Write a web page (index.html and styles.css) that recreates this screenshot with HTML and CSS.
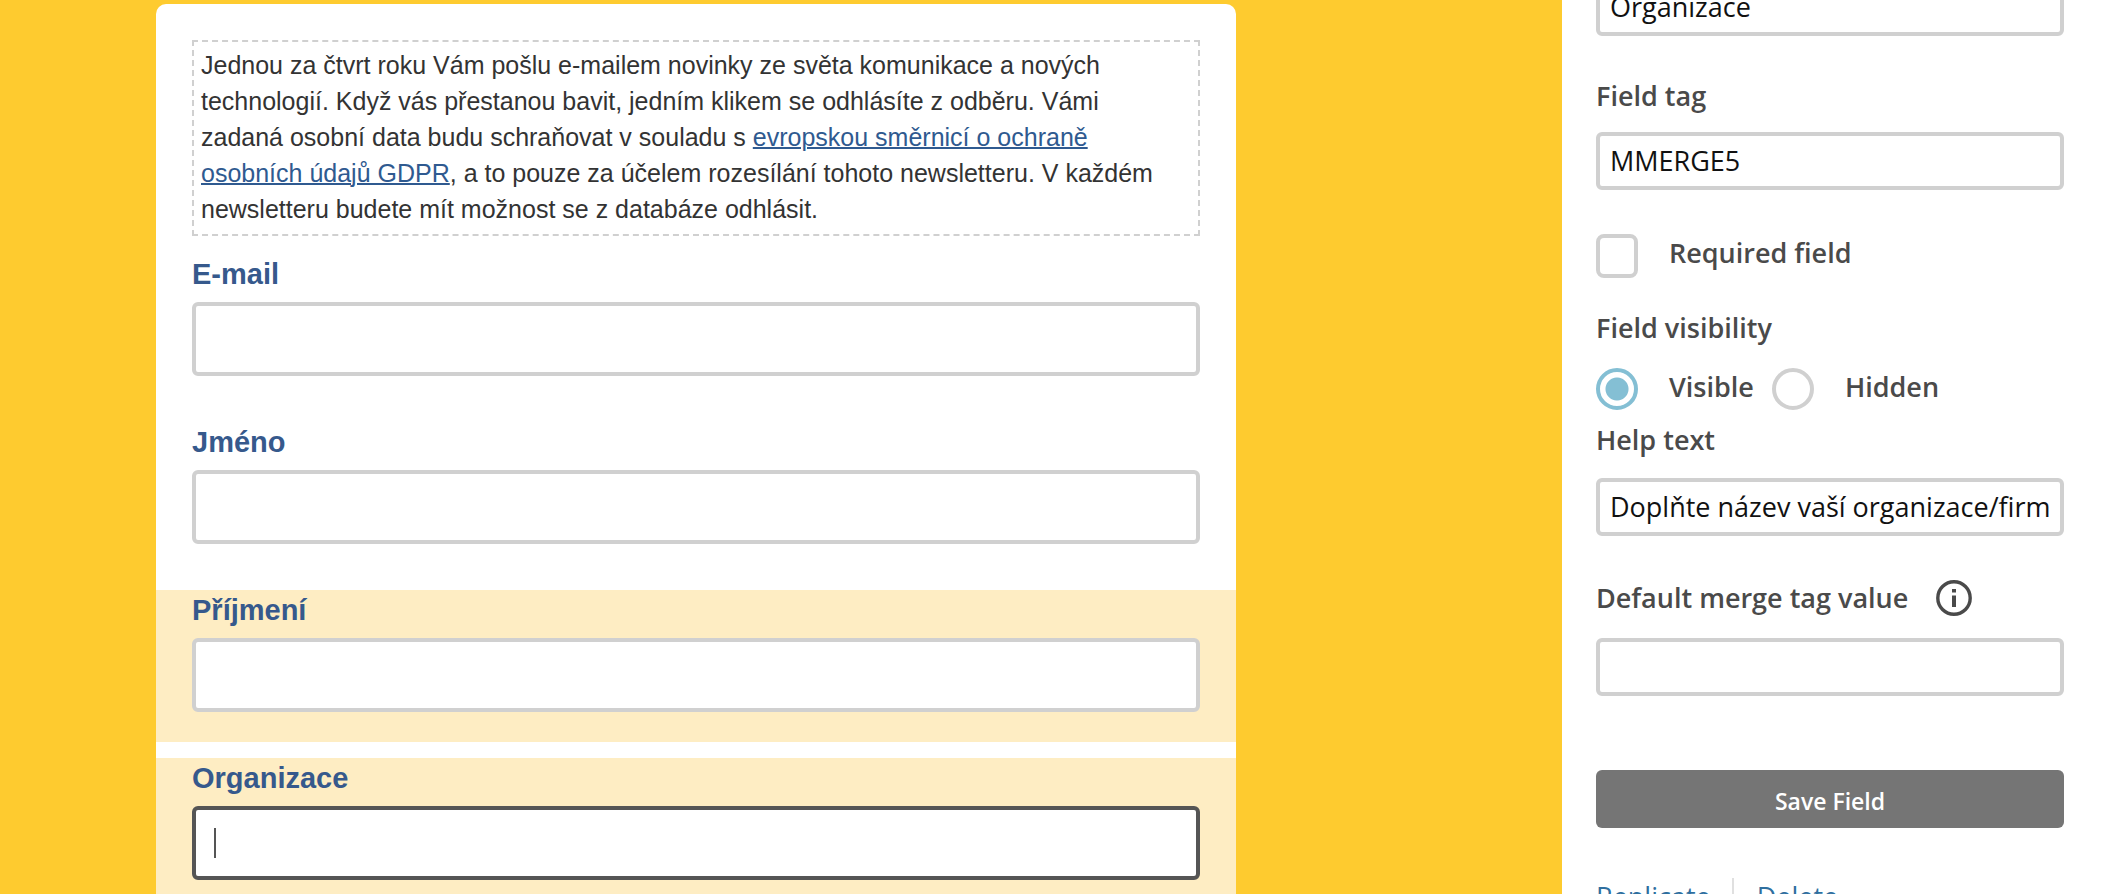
FILE: index.html
```html
<!DOCTYPE html>
<html lang="cs">
<head>
<meta charset="utf-8">
<title>Form builder</title>
<link rel="stylesheet" href="styles.css">
</head>
<body>
<div class="builder">
  <main class="preview">
    <form class="card">
      <p class="intro">Jednou za čtvrt roku Vám pošlu e-mailem novinky ze světa komunikace a nových technologií. Když vás přestanou bavit, jedním klikem se odhlásíte z odběru. Vámi zadaná osobní data budu schraňovat v souladu s <a class="intro-link" href="#gdpr">evropskou směrnicí o ochraně osobních údajů GDPR</a>, a to pouze za účelem rozesílání tohoto newsletteru. V každém newsletteru budete mít možnost se z databáze odhlásit.</p>
      <div class="field">
        <label class="field-label" for="email">E-mail</label>
        <input class="field-input" id="email" type="text">
      </div>
      <div class="field">
        <label class="field-label" for="first">Jméno</label>
        <input class="field-input" id="first" type="text">
      </div>
      <div class="field field-marked">
        <label class="field-label" for="last">Příjmení</label>
        <input class="field-input" id="last" type="text">
      </div>
      <div class="field field-marked">
        <label class="field-label" for="org">Organizace</label>
        <div class="input-wrap">
          <input class="field-input field-input-active" id="org" type="text">
          <span class="caret"></span>
        </div>
      </div>
    </form>
  </main>
  <aside class="settings">
    <form class="settings-form">
      <input class="text-input" type="text" value="Organizace" aria-label="Field label">
      <label class="label label-tag" for="tag">Field tag</label>
      <input class="text-input" id="tag" type="text" value="MMERGE5">
      <div class="choice choice-required">
        <input class="check" id="required" type="checkbox">
        <label class="label" for="required">Required field</label>
      </div>
      <fieldset class="group">
        <legend class="label">Field visibility</legend>
        <div class="choices">
          <div class="choice">
            <input class="radio" id="visible" name="visibility" type="radio" checked>
            <label class="label" for="visible">Visible</label>
          </div>
          <div class="choice">
            <input class="radio" id="hidden" name="visibility" type="radio">
            <label class="label" for="hidden">Hidden</label>
          </div>
        </div>
      </fieldset>
      <label class="label label-help" for="help">Help text</label>
      <input class="text-input" id="help" type="text" value="Doplňte název vaší organizace/firm">
      <div class="label-row">
        <label class="label" for="default">Default merge tag value</label>
        <svg class="info" viewBox="0 0 36 36" aria-hidden="true">
          <circle cx="18" cy="18" r="16.2" fill="none" stroke="#4a4a4a" stroke-width="3.4"/>
          <path d="M16 9h4v3.6h-4zM16 15.6h4v11.4h-4z" fill="#4a4a4a"/>
        </svg>
      </div>
      <input class="text-input" id="default" type="text">
      <button class="save" type="button">Save Field</button>
      <div class="actions">
        <a class="action" href="#replicate">Replicate</a>
        <a class="action" href="#delete">Delete</a>
      </div>
    </form>
  </aside>
</div>
</body>
</html>
```

FILE: styles.css
```css
* {
  box-sizing: border-box;
}

body {
  margin: 0;
  background: #fff;
}

.builder {
  display: flex;
  height: 100vh;
  overflow: hidden;
}

/* Form preview */
.preview {
  flex: 1;
  min-width: 0;
  padding: 4px 326px 0 156px;
  background: #fecb2f;
  font-family: "Liberation Sans", Arial, sans-serif;
}

.card {
  display: flex;
  flex-direction: column;
  gap: 16px;
  min-height: 100%;
  padding-top: 36px;
  border-radius: 10px 10px 0 0;
  background: #fff;
}

.intro {
  margin: 0 36px 2px;
  padding: 5px 32px 7px 7px;
  border: 2px dashed #d0d0d0;
  color: #333;
  font-size: 25px;
  line-height: 36px;
}

.intro-link {
  color: #2f5a90;
  text-decoration-thickness: 2px;
}

.field {
  padding: 0 36px 30px;
}

.field-marked {
  background: #feedc3;
}

.field-label {
  display: block;
  margin-bottom: 8px;
  color: #36598c;
  font-size: 29px;
  font-weight: 700;
  line-height: 40px;
}

.field-input {
  display: block;
  width: 100%;
  height: 74px;
  padding: 0 18px;
  border: 4px solid #d0d0d0;
  border-radius: 6px;
  background: #fff;
  font: inherit;
}

.field-input-active {
  border-color: #555;
}

.input-wrap {
  position: relative;
}

.caret {
  position: absolute;
  top: 22px;
  left: 22px;
  width: 2px;
  height: 30px;
  background: #555;
}

/* Field settings */
.settings {
  flex: 0 0 560px;
  padding: 0 58px 0 34px;
  font-family: "Open Sans", "Noto Sans", sans-serif;
}

/* The panel is scrolled past the top of its first input */
.settings-form {
  margin-top: -22px;
}

.text-input {
  display: block;
  width: 100%;
  height: 58px;
  padding: 0 10px 1px;
  border: 4px solid #d0d0d0;
  border-radius: 6px;
  background: #fff;
  color: #111;
  font: inherit;
  font-size: 27px;
}

.label {
  display: block;
  padding: 0;
  color: #4a4a4a;
  font-size: 27px;
  font-weight: 600;
  line-height: 36px;
}

.label-tag {
  margin: 42px 0 18px;
}

.choice {
  display: flex;
  gap: 31px;
}

.choice-required {
  padding-top: 44px;
}

.choice .label {
  padding-top: 1px;
}

.check,
.radio {
  flex: none;
  appearance: none;
  width: 42px;
  height: 44px;
  margin: 0;
  border: 4px solid #d0d0d0;
  border-radius: 8px;
  background: #fff;
}

.radio {
  height: 42px;
  border-radius: 50%;
}

.radio:checked {
  border-color: #84bfd4;
  background: radial-gradient(circle, #84bfd4 11px, #fff 12px);
}

.group {
  margin: 32px 0 0;
  padding: 0;
  border: 0;
}

.choices {
  display: flex;
  gap: 18px;
  padding-top: 22px;
}

.label-help {
  margin: 12px 0 20px;
}

.label-row {
  display: flex;
  align-items: center;
  gap: 28px;
  margin: 44px 0 22px;
}

.info {
  width: 36px;
  height: 36px;
}

.save {
  display: block;
  width: 100%;
  height: 58px;
  margin-top: 74px;
  padding: 4px 0 0;
  border: 0;
  border-radius: 6px;
  background: #757575;
  color: #fff;
  font: inherit;
  font-size: 23px;
  font-weight: 600;
}

.actions {
  display: flex;
  margin-top: 50px;
}

.action {
  color: #2f6f9f;
  font-size: 27px;
  line-height: 38px;
  text-decoration: none;
}

.action + .action {
  margin-left: 21px;
  padding-left: 23px;
  border-left: 2px solid #e0e0e0;
}
```
